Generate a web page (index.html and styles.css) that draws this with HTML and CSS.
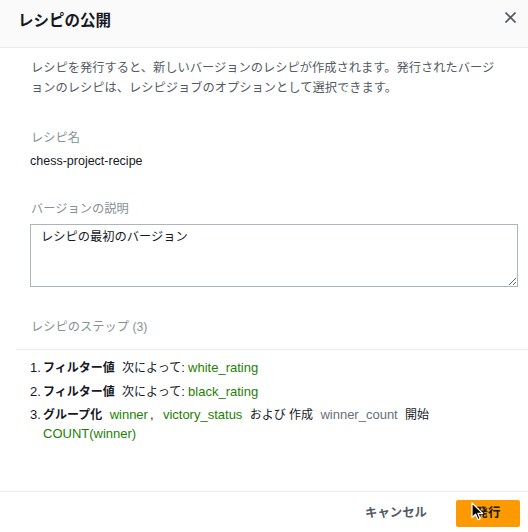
FILE: index.html
```html
<!DOCTYPE html>
<html lang="ja">
<head>
<meta charset="utf-8">
<title>レシピの公開</title>
<link rel="stylesheet" href="styles.css">
</head>
<body>
<div class="modal">
  <header class="modal-header">
    <h1 class="modal-title">レシピの公開</h1>
    <button class="close" aria-label="閉じる">
      <svg width="11" height="11" viewBox="0 0 11 11"><path d="M0.5 0.5 L10.5 10.5 M10.5 0.5 L0.5 10.5" stroke="#545b64" stroke-width="1.6" fill="none"/></svg>
    </button>
  </header>
  <main class="modal-body">
    <p class="desc">レシピを発行すると、新しいバージョンのレシピが作成されます。発行されたバージョンのレシピは、レシピジョブのオプションとして選択できます。</p>
    <div class="field name-field">
      <div class="label">レシピ名</div>
      <div class="value">chess-project-recipe</div>
    </div>
    <div class="field ver-field">
      <div class="label">バージョンの説明</div>
      <textarea class="textarea">レシピの最初のバージョン</textarea>
    </div>
    <div class="label steps-title">レシピのステップ (3)</div>
    <hr class="sep">
    <ol class="steps">
      <li><span class="num">1.</span><span class="txt"><b>フィルター値</b> 次によって<span class="lat">:</span> <span class="g">white_rating</span></span></li>
      <li><span class="num">2.</span><span class="txt"><b>フィルター値</b> 次によって<span class="lat">:</span> <span class="g">black_rating</span></span></li>
      <li><span class="num">3.</span><span class="txt"><b>グループ化</b> <span class="tok tok-first g">winner</span><span class="lat">,</span> <span class="tok tok-after-comma g">victory_status</span> および 作成 <span class="tok m">winner_count</span> 開始 <span class="g">COUNT(winner)</span></span></li>
    </ol>
  </main>
  <footer class="modal-footer">
    <button class="btn-cancel">キャンセル</button>
    <button class="btn-primary">発行</button>
  </footer>
  <svg class="cursor" width="13" height="19" viewBox="0 0 13 19"><path d="M1 1 L1 15.5 L4.6 12.2 L7 17.6 L9.2 16.6 L6.9 11.4 L11.6 11.4 Z" fill="#000" stroke="#fff" stroke-width="1.2" stroke-linejoin="round"/></svg>
</div>
</body>
</html>
```
FILE: styles.css
```css
* { box-sizing: border-box; }
html, body { margin: 0; padding: 0; background: #fff; }
body {
  font-family: "Liberation Sans", "Noto Sans CJK JP", sans-serif;
  color: #16191f;
}
.modal {
  position: relative;
  width: 528px;
  height: 532px;
  display: flex;
  flex-direction: column;
  background: #fff;
  overflow: hidden;
}
.modal-header {
  height: 48px;
  flex: none;
  background: #fafafa;
  border-bottom: 1px solid #eaeded;
  display: flex;
  justify-content: space-between;
  align-items: flex-start;
  padding: 11px 12px 0 18px;
}
.modal-title {
  margin: 0;
  font-size: 15.5px;
  line-height: 20px;
  font-weight: 700;
  color: #16191f;
}
.close {
  border: 0;
  background: none;
  padding: 0;
  margin-top: 1px;
  width: 11px;
  height: 11px;
  display: block;
  cursor: pointer;
}
.close svg { display: block; }
.modal-body {
  flex: 1;
  padding: 10px 10px 0 30px;
  font-size: 12.25px;
}
.desc {
  margin: 0;
  padding-right: 14px;
  line-height: 20px;
  color: #545b64;
  padding-left: 1px;
}
.label {
  color: #879196;
  line-height: 18px;
  padding-left: 1px;
}
.name-field { margin-top: 31px; }
.value {
  margin-top: 5px;
  line-height: 18px;
  font-size: 12.5px;
  color: #16191f;
}
.ver-field { margin-top: 30px; }
.textarea {
  display: block;
  margin-top: 6px;
  width: 488px;
  height: 63px;
  border: 1px solid #aab7b8;
  border-radius: 0;
  padding: 3px 10px;
  font-family: "Liberation Sans", "Noto Sans CJK JP", sans-serif;
  font-size: 12.25px;
  line-height: 18px;
  color: #16191f;
  resize: both;
  outline: none;
}
.steps-title { margin-top: 31px; }
.sep {
  margin: 13px -10px 0 -14px;
  border: 0;
  border-top: 1px solid #eaeded;
  height: 0;
}
.steps {
  list-style: none;
  margin: 9px 0 0 0;
  padding: 0;
  font-size: 12px;
  color: #16191f;
}
.steps li {
  display: grid;
  grid-template-columns: 13px 1fr;
  line-height: 17.5px;
  margin-bottom: 5px;
}
.num { white-space: nowrap; font-size: 13px; }
.lat { font-size: 13px; }
.steps b { font-weight: 700; margin-right: 4px; }
.g { color: #1d8102; font-size: 13px; }
.m { color: #687078; font-size: 13px; }
.tok { padding: 0 4px; }
.tok-first { padding: 0 2px 0 0; }
.tok-after-comma { padding-left: 6px; }
.modal-footer {
  flex: none;
  border-top: 1px solid #eaeded;
  height: 41px;
  display: flex;
  justify-content: flex-end;
  align-items: flex-start;
  gap: 15px;
  padding: 8px 8px 0 0;
}
.btn-cancel, .btn-primary {
  font-family: "Liberation Sans", "Noto Sans CJK JP", sans-serif;
  font-size: 12.4px;
  font-weight: 700;
  height: 27px;
  line-height: 27px;
  border: 0;
  cursor: pointer;
}
.btn-cancel {
  background: none;
  color: #545b64;
  padding: 0 14px;
}
.btn-primary {
  background: #ff9900;
  color: #16191f;
  border-radius: 2px;
  width: 64px;
  padding: 0;
}
.cursor {
  position: absolute;
  left: 471px;
  top: 502px;
}
```
